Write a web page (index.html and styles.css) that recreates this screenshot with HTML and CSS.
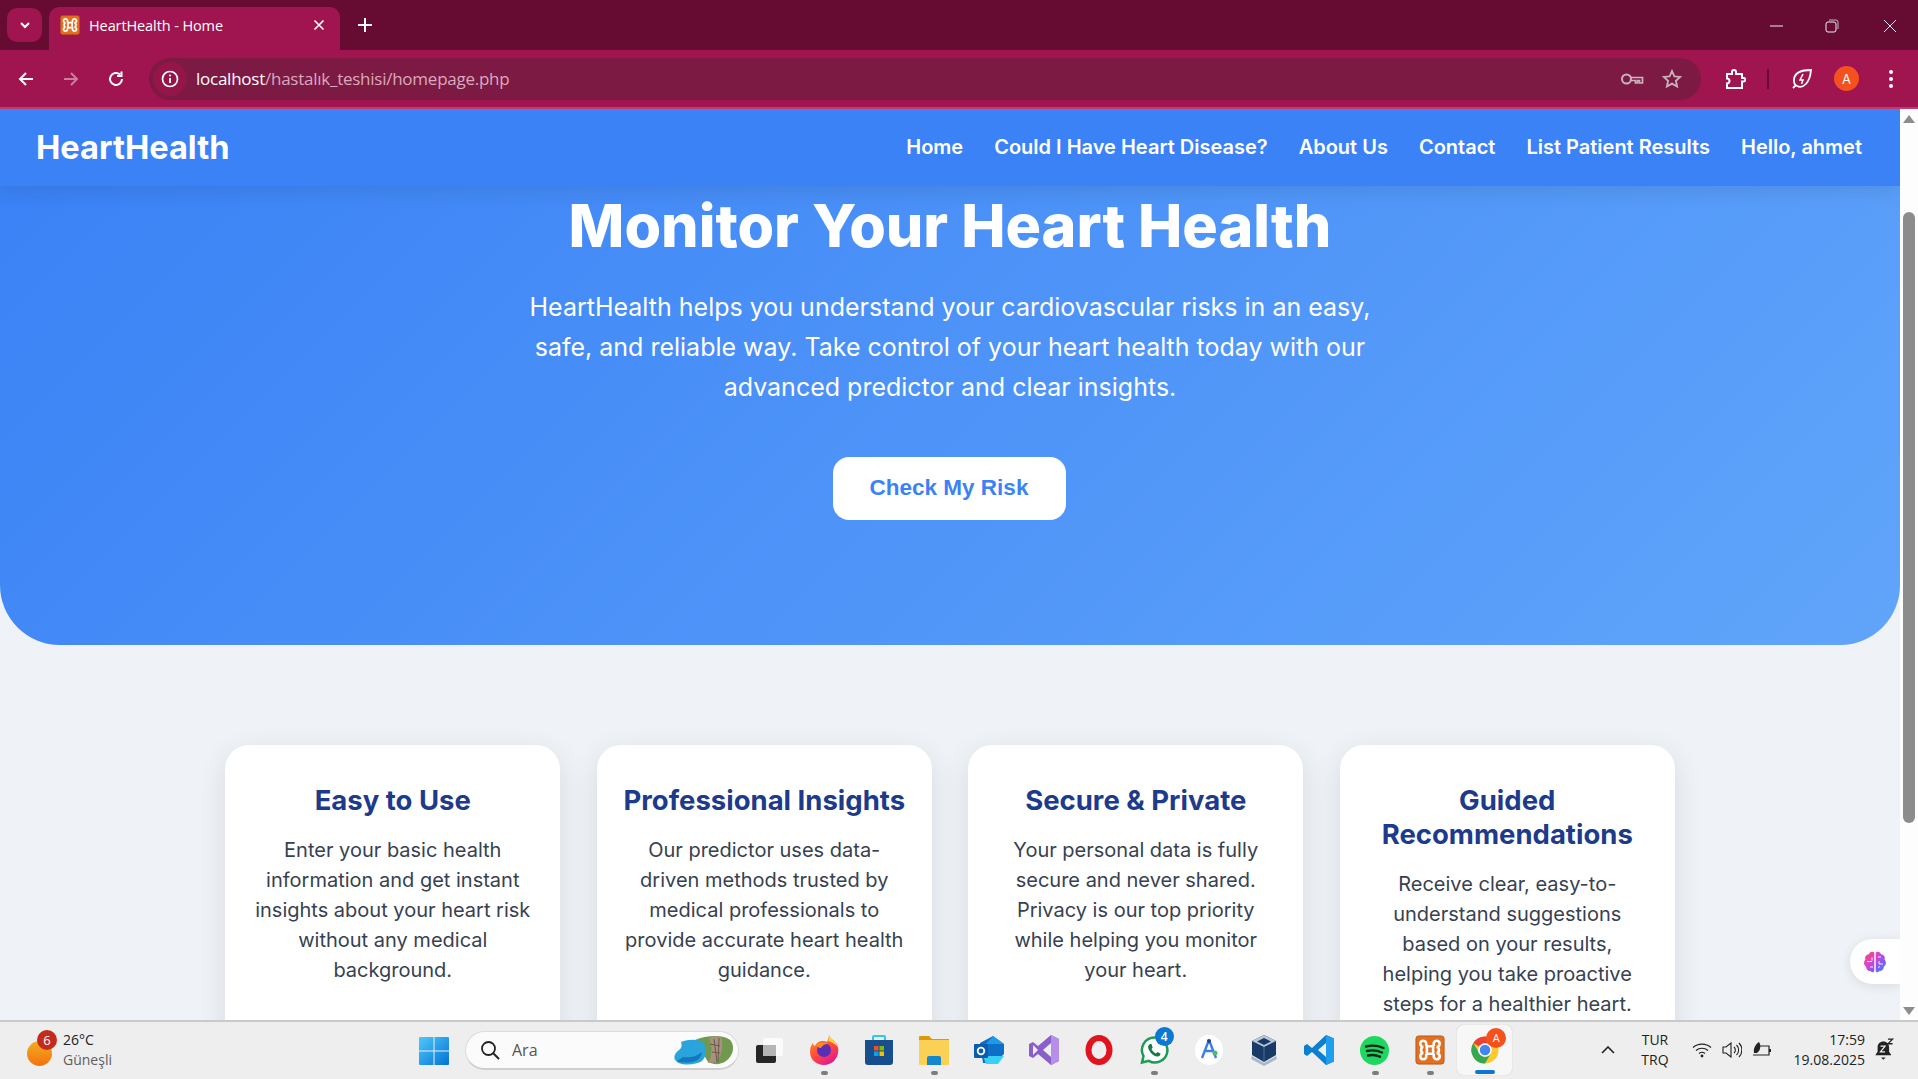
FILE: index.html
```html
<!DOCTYPE html>
<html lang="en">
<head>
    <meta charset="UTF-8">
    <meta name="viewport" content="width=device-width, initial-scale=1.0">
    <title>HeartHealth - Home</title>
    <link rel="stylesheet" href="styles.css">
</head>
<body>
    <svg class="defs" width="0" height="0">
        <symbol id="xampp" viewBox="0 0 32 32">
            <rect x="1" y="1" width="30" height="30" rx="3" fill="#e46f1e" stroke="#b9581a"/>
            <path d="M12 12h8M12 20h8M12 12V9.500A3.200 3.200 0 1 0 8.800 12.500C7 13 6.500 14.500 6.500 16s.5 3 2.300 3.500A3.200 3.200 0 1 0 12 22.500V20M20 12V9.500a3.200 3.200 0 1 1 3.200 3c1.800.5 2.300 2 2.300 3.500s-.5 3-2.300 3.500a3.200 3.200 0 1 1-3.200 3V20M12 12c1 1 1 7 0 8M20 12c-1 1-1 7 0 8" fill="none" stroke="#fff" stroke-width="2.800"/>
        </symbol>
    </svg>

    <div class="screen">
        <!-- Browser tab strip -->
        <header class="tabstrip">
            <button class="tab-list">
                <svg width="12" height="12" viewBox="0 0 12 12"><path d="M2 4l4 4 4-4" fill="none" stroke="#fff" stroke-width="2"/></svg>
            </button>
            <div class="tab">
                <svg class="favicon" width="20" height="20"><use href="#xampp"/></svg>
                <span class="tab-title">HeartHealth - Home</span>
                <svg width="12" height="12" viewBox="0 0 12 12"><path d="M1.500 1.500l9 9m0-9l-9 9" stroke="#fff" stroke-width="1.600"/></svg>
            </div>
            <svg class="new-tab" width="14" height="14" viewBox="0 0 14 14"><path d="M7 0v14M0 7h14" stroke="#fff" stroke-width="2"/></svg>
            <div class="win-controls">
                <svg width="14" height="14" viewBox="0 0 14 14"><path d="M0 7h13" stroke="#eee" stroke-width="1"/></svg>
                <svg width="14" height="14" viewBox="0 0 14 14"><rect x="1" y="3" width="10" height="10" rx="2" fill="none" stroke="#eee"/><path d="M4 1h7a2 2 0 0 1 2 2v7" fill="none" stroke="#bbb"/></svg>
                <svg class="win-close" width="14" height="14" viewBox="0 0 14 14"><path d="M1 1l12 12m0-12L1 13" stroke="#eee"/></svg>
            </div>
        </header>

        <!-- Browser toolbar -->
        <div class="toolbar">
            <div class="nav-buttons">
                <svg width="18" height="18" viewBox="0 0 18 18"><path d="M16 9H3m6-6L3 9l6 6" fill="none" stroke="#fff" stroke-width="2"/></svg>
                <svg width="18" height="18" viewBox="0 0 18 18"><path d="M2 9h13M9 3l6 6-6 6" fill="none" stroke="#fff" stroke-opacity=".45" stroke-width="2"/></svg>
                <svg width="18" height="18" viewBox="0 0 18 18"><path d="M15 9a6 6 0 1 1-2-4.500M14.500 1.500v4.500H10" fill="none" stroke="#fff" stroke-width="2"/></svg>
            </div>
            <div class="omnibox">
                <span class="site-info">
                    <svg width="18" height="18" viewBox="0 0 18 18"><circle cx="9" cy="9" r="7.500" fill="none" stroke="#fff" stroke-width="1.700"/><path d="M9 8v5" stroke="#fff" stroke-width="1.800"/><circle cx="9" cy="5.500" r="1.100" fill="#fff"/></svg>
                </span>
                <span class="url"><span class="url-host">localhost</span>/hastalık_teshisi/homepage.php</span>
                <svg class="omni-key" width="24" height="16" viewBox="0 0 24 16"><circle cx="6.500" cy="8" r="4.500" fill="none" stroke="#c9b3bd" stroke-width="2"/><path d="M11 6.500h11.500v5.500h-3V9.500h-2V12h-2V9.500H11" fill="none" stroke="#c9b3bd" stroke-width="1.700"/></svg>
                <svg class="omni-star" width="20" height="20" viewBox="0 0 20 20"><path d="M10 2l2.400 5.300 5.800.6-4.300 3.900 1.200 5.700L10 14.600l-5.100 2.900 1.200-5.700L1.800 7.900l5.800-.6z" fill="none" stroke="#c9b3bd" stroke-width="1.800"/></svg>
            </div>
            <div class="toolbar-right">
                <svg class="tool-ext" width="22" height="22" viewBox="0 0 22 22"><path d="M3 6h5V4a2 2 0 0 1 4 0v2h6v4h1.500a1.800 1.800 0 0 1 0 3.600H18V20H3v-4.500a2.500 2.500 0 0 0 0-5z" fill="none" stroke="#fff" stroke-width="2"/></svg>
                <span class="tool-sep"></span>
                <svg class="tool-leaf" width="22" height="22" viewBox="0 0 22 22"><path d="M20 2C12 2 4 4 3 11c-.5 3.500 1 6 3 7 6 3 13-3 14-16zM2 20l3-3" fill="none" stroke="#fff" stroke-width="1.800"/><path d="M12 6l-3 6h3l-1.500 4" fill="none" stroke="#fff" stroke-width="1.500"/></svg>
                <span class="avatar">A</span>
                <svg class="tool-menu" width="6" height="20" viewBox="0 0 6 20"><circle cx="3" cy="3" r="2" fill="#fff"/><circle cx="3" cy="10" r="2" fill="#fff"/><circle cx="3" cy="17" r="2" fill="#fff"/></svg>
            </div>
        </div>

        <!-- Page viewport -->
        <div class="viewport">
            <main class="page">
                <nav class="topnav">
                    <a class="logo">HeartHealth</a>
                    <ul class="nav-links">
                        <li>Home</li>
                        <li>Could I Have Heart Disease?</li>
                        <li>About Us</li>
                        <li>Contact</li>
                        <li>List Patient Results</li>
                        <li>Hello, ahmet</li>
                    </ul>
                </nav>

                <section class="hero">
                    <h1>Monitor Your Heart Health</h1>
                    <p>HeartHealth helps you understand your cardiovascular risks in an easy, safe, and reliable way. Take control of your heart health today with our advanced predictor and clear insights.</p>
                    <button class="cta">Check My Risk</button>
                </section>

                <section class="features">
                    <article class="card">
                        <h3>Easy to Use</h3>
                        <p>Enter your basic health information and get instant insights about your heart risk without any medical background.</p>
                    </article>
                    <article class="card">
                        <h3>Professional Insights</h3>
                        <p>Our predictor uses data-driven methods trusted by medical professionals to provide accurate heart health guidance.</p>
                    </article>
                    <article class="card">
                        <h3>Secure &amp; Private</h3>
                        <p>Your personal data is fully secure and never shared. Privacy is our top priority while helping you monitor your heart.</p>
                    </article>
                    <article class="card">
                        <h3>Guided Recommendations</h3>
                        <p>Receive clear, easy-to-understand suggestions based on your results, helping you take proactive steps for a healthier heart.</p>
                    </article>
                </section>

                <div class="assistant">
                    <svg width="24" height="24" viewBox="0 0 24 24">
                        <defs><linearGradient id="brain" x1="0" y1="0" x2="1" y2="1"><stop offset="0" stop-color="#f0562e"/><stop offset=".35" stop-color="#e63fd0"/><stop offset=".7" stop-color="#7c5cf0"/><stop offset="1" stop-color="#2f9cf5"/></linearGradient></defs>
                        <path d="M11.300 2.500C9 1 6.500 2 6 4.200 3 4.500 1.500 7 2.500 9.500 .5 11.500 .5 15 3 16.500c0 3 2.500 5 4.500 4.500 1.500 2 3.800 1.500 3.800-.5zM12.700 2.500C15 1 17.500 2 18 4.200c3 .3 4.500 2.800 3.500 5.300 2 2 2 5.500-.5 7 0 3-2.500 5-4.500 4.500-1.500 2-3.800 1.500-3.800-.5z" fill="url(#brain)"/>
                        <path d="M4 11.500h5M9 7.500v3M7 17h3M15 7h3M16 11v3h4M15 17.500l2-1" fill="none" stroke="#fff" stroke-width=".9"/>
                    </svg>
                </div>
            </main>

            <aside class="scrollbar">
                <span class="arrow-up"></span>
                <span class="thumb"></span>
                <span class="arrow-down"></span>
            </aside>
        </div>

        <!-- Windows taskbar -->
        <footer class="taskbar">
            <div class="weather">
                <div class="weather-icon">
                    <span class="sun"></span>
                    <span class="weather-badge">6</span>
                </div>
                <div class="weather-text">
                    <span>26°C</span>
                    <span class="weather-sub">Güneşli</span>
                </div>
            </div>

            <svg class="start" width="30" height="30" viewBox="0 0 30 30">
                <defs><linearGradient id="win" x1="0" y1="0" x2="1" y2="1"><stop offset="0" stop-color="#4fc8fb"/><stop offset="1" stop-color="#0273d4"/></linearGradient></defs>
                <path d="M1 1h13.500v13.500H0V2a1 1 0 0 1 1-1zM15.500 1H29a1 1 0 0 1 1 1v12.500H15.500zM0 15.500h14.500V29H1a1 1 0 0 1-1-1zM15.500 15.500H30V28a1 1 0 0 1-1 1H15.500z" fill="url(#win)"/>
            </svg>

            <div class="search">
                <svg width="20" height="20" viewBox="0 0 20 20"><circle cx="8.500" cy="8.500" r="6.500" fill="none" stroke="#222" stroke-width="1.800"/><path d="M13 13l6 6" stroke="#222" stroke-width="2"/></svg>
                <span class="search-text">Ara</span>
                <svg class="search-art" width="62" height="32" viewBox="0 0 62 32">
                    <path d="M22 6c12-5 30-6 36 1 4 6 2 15-5 20-6 4-12 4-18 1z" fill="#6f9a4e"/>
                    <path d="M36 4c5-2 9-2 12-1 3 7 1 17-4 25l-9 1c5-8 4-18 1-25z" fill="#a8917e"/>
                    <path d="M41 5l3 23M46 4l-1 24M37 10l10 2M39 18l8 1" fill="none" stroke="#6d5a4d" stroke-width="1"/>
                    <path d="M8 8c8-3 18-3 23 1 3 5 3 13-2 18-6 4-19 5-25 1-5-4-2-9 2-12 3-2 3-5 2-8z" fill="#2aa4dc"/>
                    <path d="M10 23c6 1 13 0 19-5-1 5-3 8-7 9-6 2-14 2-18 0z" fill="#1477bd"/>
                </svg>
            </div>

            <div class="apps">
                <div class="app">
                    <svg width="28" height="28" viewBox="0 0 28 28"><rect x="1" y="9" width="20" height="18" rx="2" fill="#262626"/><rect x="8" y="2" width="20" height="18" rx="2" fill="#fff" fill-opacity=".75"/><rect x="8" y="9" width="13" height="11" fill="#b5b5b5"/></svg>
                </div>
                <div class="app has-dot">
                    <svg width="30" height="30" viewBox="0 0 30 30">
                        <defs><linearGradient id="ff" x1="0" y1="0" x2=".6" y2="1"><stop offset="0" stop-color="#ff9a1e"/><stop offset=".6" stop-color="#ff4a3d"/><stop offset="1" stop-color="#e6198c"/></linearGradient></defs>
                        <path d="M20 0c1 3 3 4 5 6 4 4 5 8 4 12-1 7-7 12-14 12S1 25 1 17c0-4 1-7 3-9 0 2 1 3 2 3 1-3 4-5 7-5 3 0 4 0 5 1 1-2 2-5 2-7z" fill="url(#ff)"/>
                        <path d="M20 0c1 3 3 4 5 6 2 2 3 4 4 7-2-4-6-6-10-7 1-2 1-4 1-6z" fill="#ffd43a"/>
                        <circle cx="15" cy="15" r="7" fill="#5b2fb5"/>
                        <path d="M7 10c3-3 9-3 12-1-4 0-6 2-7 4-2 0-4-1-5-3z" fill="#ff8a1f"/>
                    </svg>
                </div>
                <div class="app">
                    <svg width="30" height="32" viewBox="0 0 30 32">
                        <path d="M9 6V3a1 1 0 0 1 1-1h10a1 1 0 0 1 1 1v3" fill="none" stroke="#31c5f4" stroke-width="2"/>
                        <path d="M1 6h28v22a3 3 0 0 1-3 3H4a3 3 0 0 1-3-3z" fill="#164f8c"/>
                        <rect x="10" y="12" width="4.500" height="4.500" fill="#f25022"/><rect x="15.500" y="12" width="4.500" height="4.500" fill="#7fba00"/><rect x="10" y="17.500" width="4.500" height="4.500" fill="#00a4ef"/><rect x="15.500" y="17.500" width="4.500" height="4.500" fill="#ffb900"/>
                    </svg>
                </div>
                <div class="app has-dot">
                    <svg width="30" height="30" viewBox="0 0 30 30">
                        <path d="M0 2a1 1 0 0 1 1-1h9l3 3h17v3H0z" fill="#d99a0c"/>
                        <path d="M0 5h30v24a1 1 0 0 1-1 1H1a1 1 0 0 1-1-1z" fill="#fbd155"/>
                        <path d="M8 23a2 2 0 0 1 2-2h10a2 2 0 0 1 2 2v7H8z" fill="#1487cf"/>
                    </svg>
                </div>
                <div class="app">
                    <svg width="30" height="28" viewBox="0 0 30 28">
                        <path d="M6 7l13-7 11 8v10l-9 9H9z" fill="#0f6fc6"/>
                        <path d="M19 0l11 8H12z" fill="#1c9be6"/>
                        <path d="M9 20h21l-6 8H12z" fill="#39d0f5"/>
                        <rect x="0" y="8" width="14" height="14" rx="1" fill="#0a5cb0"/>
                        <circle cx="7" cy="15" r="3.300" fill="none" stroke="#fff" stroke-width="1.800"/>
                    </svg>
                </div>
                <div class="app">
                    <svg width="30" height="30" viewBox="0 0 30 30">
                        <path d="M22 0l8 4v22l-8 4-13-11-5 4-4-2V9l4-2 5 4z" fill="#8a5fc9"/>
                        <path d="M22 0l8 4v22l-8 4z" fill="#b78fe8"/>
                        <path d="M22 8v14l-8-7z" fill="#eeeeee"/>
                        <path d="M4 10l5 5-5 5z" fill="#eeeeee"/>
                    </svg>
                </div>
                <div class="app">
                    <svg width="28" height="30" viewBox="0 0 28 30"><ellipse cx="14" cy="15" rx="10.500" ry="12" fill="none" stroke="#e0131f" stroke-width="6"/></svg>
                </div>
                <div class="app has-dot">
                    <svg width="30" height="30" viewBox="0 0 30 30">
                        <path d="M15.500 2.500a12.500 12.500 0 0 0-11 18.500L3 27.500l6.800-1.600A12.500 12.500 0 1 0 15.500 2.500z" fill="#fff" stroke="#1a9c57" stroke-width="2.500"/>
                        <path d="M11 9c-2 1-2.500 3-1 6 1.500 3 4.500 6 8 6.500 2 .2 3.500-1 3.500-3l-3-1.500-1.500 1.500c-2-1-3.500-2.500-4.500-4.500l1.200-1.300L12.500 9z" fill="#167a45"/>
                    </svg>
                    <span class="app-badge">4</span>
                </div>
                <div class="app">
                    <svg width="28" height="30" viewBox="0 0 28 30">
                        <ellipse cx="14" cy="15" rx="14" ry="15" fill="#fff"/>
                        <path d="M14 5l-7 18M14 5l7 18M9 16h10" fill="none" stroke="#3d7fe6" stroke-width="2.400"/>
                        <circle cx="14" cy="6" r="2" fill="#24418a"/>
                        <circle cx="20" cy="18" r="2.500" fill="#57b96a"/>
                    </svg>
                </div>
                <div class="app">
                    <svg width="28" height="32" viewBox="0 0 28 32">
                        <path d="M2 22l12 7 12-7 1 3-13 7-13-7z" fill="#a9b8cc"/>
                        <path d="M14 1l12 6v14l-12 7-12-7V7z" fill="#183a66"/>
                        <path d="M14 1l12 6-12 6L2 7z" fill="#b8c6d8"/>
                        <path d="M14 4l7 3.500-7 3.500-7-3.500z" fill="#183a66"/>
                        <path d="M14 13v15" stroke="#4d6d94" stroke-width="1"/>
                    </svg>
                </div>
                <div class="app">
                    <svg width="30" height="30" viewBox="0 0 30 30">
                        <path d="M22 0l8 3.500v23L22 30 8 17l-5 4-3-2V11l3-2 5 4z" fill="#0b7fd0"/>
                        <path d="M22 0l8 3.500v23L22 30z" fill="#1f9ef0"/>
                        <path d="M22 8l-8 7 8 7z" fill="#eeeeee"/>
                    </svg>
                </div>
                <div class="app has-dot">
                    <svg width="29" height="29" viewBox="0 0 29 29">
                        <circle cx="14.500" cy="14.500" r="14.500" fill="#1ed760"/>
                        <path d="M6 10.500c6-1.500 12-1 17.500 1.500M7 15c5-1.200 10-.8 15 1.500M8 19.500c4-1 8-.7 12 1.200" fill="none" stroke="#12291a" stroke-width="2.400" stroke-linecap="round"/>
                    </svg>
                </div>
                <div class="app has-dot">
                    <svg width="30" height="30"><use href="#xampp"/></svg>
                </div>
                <div class="app app-active">
                    <svg width="30" height="30" viewBox="0 0 32 32">
                        <circle cx="16" cy="16" r="14.500" fill="#fcc934"/>
                        <path d="M16 1.500A14.500 14.500 0 0 1 28.600 9H16a7 7 0 0 0-6.100 3.500L3.500 8.500A14.500 14.500 0 0 1 16 1.500z" fill="#ea4335"/>
                        <path d="M3.500 8.500A14.500 14.500 0 0 0 16 30.500l6-10.500a7 7 0 0 1-12-.5z" fill="#34a853"/>
                        <circle cx="16" cy="16" r="7.300" fill="#fff"/>
                        <circle cx="16" cy="16" r="5.600" fill="#4285f4"/>
                    </svg>
                    <span class="chrome-badge">A</span>
                    <span class="active-bar"></span>
                </div>
            </div>

            <div class="tray">
                <svg class="tray-chevron" width="14" height="8" viewBox="0 0 14 8"><path d="M1 7l6-6 6 6" fill="none" stroke="#222" stroke-width="1.600"/></svg>
                <div class="lang"><span>TUR</span><span>TRQ</span></div>
                <svg class="tray-wifi" width="20" height="16" viewBox="0 0 20 16"><path d="M1 5.500c5-4.500 13-4.500 18 0M4 8.500c3.500-3 8.500-3 12 0M7 11.500c1.800-1.500 4.200-1.500 6 0" fill="none" stroke="#222" stroke-width="1.200"/><circle cx="10" cy="14" r="1.400" fill="#222"/></svg>
                <svg class="tray-sound" width="20" height="16" viewBox="0 0 20 16"><path d="M1 5h3l5-4v14l-5-4H1z" fill="none" stroke="#222" stroke-width="1.100"/><path d="M12 5a4 4 0 0 1 0 6M14.500 3a7 7 0 0 1 0 10M17 1a10 10 0 0 1 0 14" fill="none" stroke="#222" stroke-width="1.100"/></svg>
                <svg class="tray-battery" width="20" height="16" viewBox="0 0 20 16"><path d="M6 4h11v9H1" fill="none" stroke="#222" stroke-width="1.200"/><path d="M17 7h2v3h-2z" fill="#222"/><path d="M2 11C1 6 4 2 7 0c2 3 2 8-2 11z" fill="#222"/></svg>
                <div class="clock"><span>17:59</span><span>19.08.2025</span></div>
                <svg class="tray-bell" width="21" height="23" viewBox="0 0 18 20"><path d="M8 3c-3 0-5 2-5 5v4l-2 3h14l-2-3V8c0-3-2-5-5-5z" fill="#222"/><path d="M6 17h4l-2 2z" fill="#222"/><path d="M5.500 7h4l-4 5h4" fill="none" stroke="#eee" stroke-width="1.100"/><path d="M12 1h4l-4 4h4" fill="none" stroke="#222" stroke-width="1.100"/></svg>
            </div>
        </footer>
    </div>
</body>
</html>
```

FILE: styles.css
```css
/* Overall Body Styling */
* {
    box-sizing: border-box;
}

body {
    margin: 0;
    font-family: 'Inter', sans-serif;
    background: #000;
}

.defs {
    display: block;
    height: 0;
}

.screen {
    display: flex;
    flex-direction: column;
    width: 1918px;
    height: 1079px;
    overflow: hidden;
}

/* Browser Tab Strip */
.tabstrip {
    flex: none;
    display: flex;
    align-items: flex-end;
    height: 50px;
    background: #660c33;
    color: #fff;
    font-family: 'Open Sans', sans-serif;
}

.tab-list {
    display: flex;
    align-items: center;
    justify-content: center;
    width: 35px;
    height: 34px;
    margin: 0 7px 8px 7px;
    padding: 0;
    border: none;
    border-radius: 10px;
    background: #a0154f;
}

.tab {
    display: flex;
    align-items: center;
    width: 291px;
    height: 43px;
    padding: 0 15px 7px 11px;
    border-radius: 10px 10px 0 0;
    background: #a0154f;
}

.favicon {
    flex: none;
}

.tab-title {
    flex: 1;
    margin-left: 9px;
    font-size: 14.5px;
    letter-spacing: -0.1px;
}

.new-tab {
    margin: 0 0 18px 18px;
}

.win-controls {
    display: flex;
    gap: 41px;
    margin: 0 21px 17px auto;
}

.win-close {
    margin-left: 3px;
}

/* Browser Toolbar */
.toolbar {
    flex: none;
    display: flex;
    align-items: center;
    height: 59px;
    background: #a0154f;
    border-bottom: 2px solid #c23a6e;
}

.nav-buttons {
    display: flex;
    gap: 27px;
    width: 149px;
    padding-left: 17px;
}

.omnibox {
    display: flex;
    align-items: center;
    width: 1552px;
    height: 42px;
    padding: 0 14px 0 4px;
    border-radius: 21px;
    background: #7d1a44;
}

.site-info {
    display: flex;
    align-items: center;
    justify-content: center;
    width: 34px;
    height: 34px;
    border-radius: 50%;
    background: #941648;
}

.url {
    flex: 1;
    margin-left: 9px;
    font-family: 'Open Sans', sans-serif;
    font-size: 17px;
    letter-spacing: -0.25px;
    color: #d9a9bc;
}

.url-host {
    color: #fff;
}

.omni-key {
    margin-right: 18px;
}

.omni-star {
    margin-right: 5px;
}

.toolbar-right {
    display: flex;
    align-items: center;
    flex: 1;
    padding-left: 23px;
}

.tool-sep {
    width: 2px;
    height: 20px;
    margin-left: 21px;
    background: #660c33;
}

.tool-leaf {
    margin-left: 22px;
}

.avatar {
    display: flex;
    align-items: center;
    justify-content: center;
    width: 25px;
    height: 25px;
    margin-left: 21px;
    border-radius: 50%;
    background: #f4511e;
    color: #fff;
    font-size: 13px;
}

.tool-menu {
    margin-left: 29px;
}

/* Page Viewport */
.viewport {
    flex: 1;
    display: flex;
    min-height: 0;
}

.page {
    position: relative;
    flex: 1;
    overflow: hidden;
    background: #eff3f8;
}

/* Top Navigation */
.topnav {
    position: relative;
    z-index: 2;
    display: flex;
    align-items: center;
    justify-content: space-between;
    height: 77px;
    padding: 0 38px 0 36px;
    background: #3b82f6;
    color: #fff;
    box-shadow: 0 4px 20px rgba(0, 0, 0, 0.1);
}

.logo {
    margin-bottom: 2px;
    font-size: 32.6px;
    font-weight: 700;
}

.nav-links {
    display: flex;
    gap: 31px;
    margin: 0 0 2px 0;
    padding: 0;
    list-style: none;
    font-size: 20px;
    font-weight: 600;
}

/* Hero */
.hero {
    display: flex;
    flex-direction: column;
    align-items: center;
    height: 459px;
    border-radius: 0 0 60px 60px;
    background: linear-gradient(135deg, #3b82f6, #60a5fa);
    color: #fff;
    text-align: center;
}

.hero h1 {
    margin: 0;
    font-size: 59.2px;
    font-weight: 800;
    line-height: 80px;
}

.hero p {
    width: 860px;
    margin: 21px 0 0 0;
    font-size: 25px;
    line-height: 40px;
}

.cta {
    width: 233px;
    height: 63px;
    margin: 50px 2px 0 0;
    padding: 0 0 2px 0;
    border: none;
    border-radius: 16px;
    background: #fff;
    color: #3b82f6;
    font-family: 'Liberation Sans', sans-serif;
    font-size: 22.5px;
    font-weight: 700;
}

/* Feature Cards */
.features {
    display: grid;
    grid-template-columns: repeat(4, 335px);
    justify-content: center;
    gap: 36.5px;
    padding-top: 100px;
}

.card {
    height: 400px;
    padding: 38px 26px;
    border-radius: 24px;
    background: #fff;
    box-shadow: 0 8px 30px rgba(0, 0, 0, 0.1);
    text-align: center;
}

.card h3 {
    margin: 0;
    font-size: 27.5px;
    font-weight: 700;
    line-height: 34px;
    color: #1e3a8a;
}

.card p {
    margin: 18px 0 0 0;
    font-size: 20px;
    line-height: 30px;
    color: #374151;
}

/* Floating Assistant Button */
.assistant {
    position: absolute;
    top: 830px;
    right: 0;
    display: flex;
    align-items: center;
    padding-left: 13px;
    width: 50px;
    height: 45px;
    border-radius: 23px 0 0 23px;
    background: #fff;
    box-shadow: 0 2px 12px rgba(0, 0, 0, 0.1);
}

/* Scrollbar */
.scrollbar {
    position: relative;
    flex: none;
    width: 18px;
    background: #fdfdfd;
}

.arrow-up,
.arrow-down {
    position: absolute;
    left: 3px;
    width: 0;
    height: 0;
    border-left: 6px solid transparent;
    border-right: 6px solid transparent;
}

.arrow-up {
    top: 6px;
    border-bottom: 8px solid #8c8c8c;
}

.arrow-down {
    bottom: 5px;
    border-top: 8px solid #8c8c8c;
}

.thumb {
    position: absolute;
    top: 103px;
    left: 3px;
    width: 12px;
    height: 611px;
    border-radius: 6px;
    background: #8c8c8c;
}

/* Windows Taskbar */
.taskbar {
    flex: none;
    display: flex;
    align-items: center;
    height: 59px;
    padding-bottom: 2px;
    background: #eeeeee;
    border-top: 2px solid #c9c9c9;
    color: #222;
    font-family: 'Open Sans', sans-serif;
}

.weather {
    display: flex;
    align-items: center;
    width: 419px;
    padding-left: 27px;
}

.weather-icon {
    position: relative;
    width: 36px;
    height: 40px;
}

.sun {
    position: absolute;
    top: 11px;
    left: 0;
    width: 25px;
    height: 25px;
    border-radius: 50%;
    background: linear-gradient(#f2b01e, #f4700f);
}

.weather-badge {
    position: absolute;
    top: 0;
    left: 10px;
    width: 20px;
    height: 20px;
    border-radius: 50%;
    background: #c42b1c;
    color: #fff;
    font-size: 13px;
    line-height: 20px;
    text-align: center;
}

.weather-text {
    display: flex;
    flex-direction: column;
    font-size: 14px;
    line-height: 20px;
}

.weather-sub {
    color: #5e5e5e;
}

.start {
    flex: none;
    margin-top: 2px;
}

.search {
    display: flex;
    align-items: center;
    width: 274px;
    height: 39px;
    margin: 2px 0 0 16px;
    padding: 0 3px 0 14px;
    border-radius: 20px;
    background: #fbfbfb;
    border: 1px solid #dcdcdc;
    border-bottom: 2px solid #cfcfcf;
}

.search-text {
    flex: 1;
    margin-left: 12px;
    font-size: 16px;
    color: #555;
}

.apps {
    display: flex;
    align-items: center;
    height: 100%;
    margin-left: 2px;
}

.app {
    position: relative;
    display: flex;
    align-items: center;
    justify-content: center;
    width: 55.1px;
    height: 50px;
    margin-top: 1px;
}

.has-dot::after {
    content: "";
    position: absolute;
    bottom: 0;
    left: 50%;
    width: 7px;
    height: 4px;
    margin-left: -3px;
    border-radius: 2px;
    background: #7d7d7d;
}

.app-badge {
    position: absolute;
    top: 2px;
    right: 8px;
    width: 19px;
    height: 19px;
    border-radius: 50%;
    background: #0a78d4;
    color: #fff;
    font-size: 12px;
    font-weight: 600;
    line-height: 19px;
    text-align: center;
}

.app-active {
    border-radius: 6px;
    background: #f7f7f7;
    box-shadow: 0 0 1px rgba(0, 0, 0, 0.25);
}

.chrome-badge {
    position: absolute;
    top: 3px;
    right: 6px;
    width: 20px;
    height: 20px;
    border-radius: 50%;
    background: #f4511e;
    color: #fff;
    font-size: 11px;
    line-height: 20px;
    text-align: center;
}

.active-bar {
    position: absolute;
    bottom: 1px;
    left: 50%;
    width: 20px;
    height: 4px;
    margin-left: -10px;
    border-radius: 2px;
    background: #0a78d4;
}

.tray {
    display: flex;
    align-items: center;
    margin-left: auto;
    padding-right: 23px;
    font-size: 14px;
}

.lang {
    display: flex;
    flex-direction: column;
    align-items: center;
    margin-left: 26px;
    line-height: 20px;
}

.tray-wifi {
    margin-left: 23.5px;
}

.tray-sound {
    margin-left: 9.5px;
}

.tray-battery {
    margin-left: 10px;
}

.clock {
    display: flex;
    flex-direction: column;
    align-items: flex-end;
    margin-left: 22px;
    line-height: 20px;
}

.tray-bell {
    margin-left: 9px;
}
```
